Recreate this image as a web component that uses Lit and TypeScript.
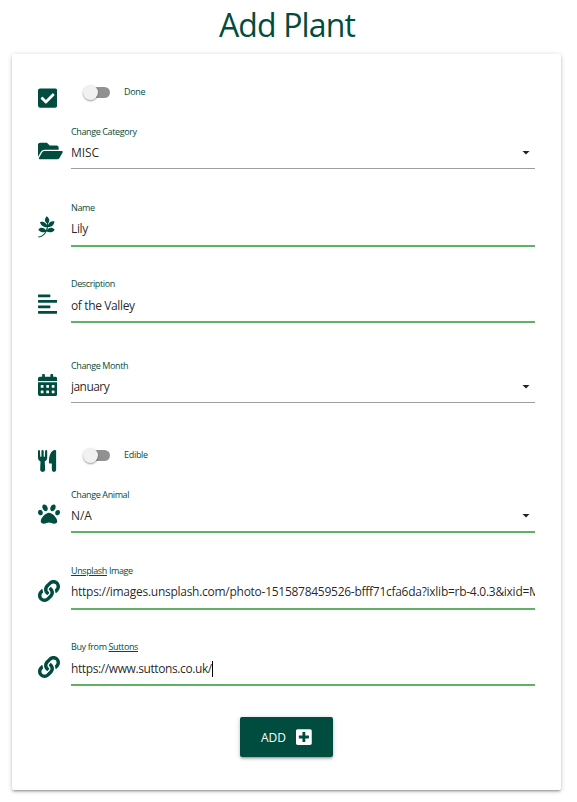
import { LitElement, html, css, svg } from "lit";
import { customElement, property } from "lit/decorators.js";
import { classMap } from "lit/directives/class-map.js";

const icons: Record<string, { w: number; d: string }> = {
  check: { w: 448, d: "M400 480H48c-26.51 0-48-21.49-48-48V80c0-26.51 21.49-48 48-48h352c26.51 0 48 21.49 48 48v352c0 26.51-21.49 48-48 48zm-204.686-98.059l184-184c6.248-6.248 6.248-16.379 0-22.627l-22.627-22.627c-6.248-6.248-16.379-6.249-22.628 0L184 302.745l-70.059-70.059c-6.248-6.248-16.379-6.248-22.628 0l-22.627 22.627c-6.248 6.248-6.248 16.379 0 22.627l104 104c6.249 6.25 16.379 6.25 22.628.001z" },
  folder: { w: 576, d: "M572.694 292.093L500.27 416.248A63.997 63.997 0 0 1 444.989 448H45.025c-18.523 0-30.064-20.093-20.731-36.093l72.424-124.155A64 64 0 0 1 152 256h399.964c18.523 0 30.064 20.093 20.73 36.093zM152 224h328v-48c0-26.51-21.49-48-48-48H272l-64-64H48C21.49 64 0 85.49 0 112v278.046l69.077-118.418C86.214 242.25 117.989 224 152 224z" },
  leaf: { w: 448, d: "M4 478C70 476 130 440 176 366C140 388 60 386 8 318C52 254 130 260 184 330C196 304 201 284 204 258C140 268 76 230 44 146C116 116 176 148 206 212L207 168C150 130 148 62 202 4C270 56 284 118 234 168L233 212C256 146 306 112 382 128C374 208 320 262 232 256C230 284 224 306 216 326C262 262 330 252 388 318C350 384 270 396 202 362C154 450 92 502 8 500Z" },
  text: { w: 448, d: "M12.83 352h262.34A12.82 12.82 0 0 0 288 339.17v-38.34A12.82 12.82 0 0 0 275.17 288H12.83A12.82 12.82 0 0 0 0 300.83v38.34A12.82 12.82 0 0 0 12.83 352zm0-256h262.34A12.82 12.82 0 0 0 288 83.17V44.83A12.82 12.82 0 0 0 275.17 32H12.83A12.82 12.82 0 0 0 0 44.83v38.34A12.82 12.82 0 0 0 12.83 96zM432 160H16a16 16 0 0 0-16 16v32a16 16 0 0 0 16 16h416a16 16 0 0 0 16-16v-32a16 16 0 0 0-16-16zm0 256H16a16 16 0 0 0-16 16v32a16 16 0 0 0 16 16h416a16 16 0 0 0 16-16v-32a16 16 0 0 0-16-16z" },
  calendar: { w: 448, d: "M400 64h-48V16c0-8.8-7.2-16-16-16h-32c-8.8 0-16 7.2-16 16v48H160V16c0-8.8-7.2-16-16-16h-32c-8.8 0-16 7.2-16 16v48H48C21.5 64 0 85.5 0 112v48h448v-48c0-26.500-21.500-48-48-48zM0 192V464c0 26.500 21.500 48 48 48h352c26.500 0 48-21.500 48-48V192zM76 256h40q12 0 12 12v40q0 12-12 12H76q-12 0-12-12v-40q0-12 12-12zm128 0h40q12 0 12 12v40q0 12-12 12h-40q-12 0-12-12v-40q0-12 12-12zm128 0h40q12 0 12 12v40q0 12-12 12h-40q-12 0-12-12v-40q0-12 12-12zM76 384h40q12 0 12 12v40q0 12-12 12H76q-12 0-12-12v-40q0-12 12-12zm128 0h40q12 0 12 12v40q0 12-12 12h-40q-12 0-12-12v-40q0-12 12-12zm128 0h40q12 0 12 12v40q0 12-12 12h-40q-12 0-12-12v-40q0-12 12-12z" },
  cutlery: { w: 448, d: "M0 24Q2 0 24 0Q44 0 46 24L52 156H80V24Q82 0 106 0Q130 0 132 24V156H160L166 24Q168 0 190 0Q212 0 214 24V190Q214 244 158 270L166 462Q166 512 108 512Q50 512 50 462L58 270Q0 244 0 190ZM422 20V462Q422 512 372 512Q322 512 322 462V312H276Q254 312 254 290C252 130 300 0 398 0Q422 0 422 20Z" },
  paw: { w: 512, d: "M256 224c-79.41 0-192 122.76-192 200.25 0 34.9 26.81 55.75 71.74 55.75 48.84 0 81.09-25.08 120.26-25.08 39.51 0 71.85 25.08 120.26 25.08 44.93 0 71.74-20.85 71.74-55.75C448 346.76 335.41 224 256 224zm-147.28-12.61c-10.4-34.65-42.44-57.09-71.56-50.13-29.12 6.96-44.29 40.69-33.89 75.34 10.4 34.65 42.44 57.09 71.56 50.13 29.12-6.96 44.29-40.69 33.89-75.34zm84.72-20.78c30.94-8.14 42.93-49.39 26.77-92.13s-54.32-70.33-85.26-62.19-42.93 49.39-26.77 92.13c16.16 42.74 54.33 70.33 85.26 62.19zm281.39-29.34c-29.12-6.96-61.15 15.48-71.56 50.13-10.4 34.65 4.77 68.38 33.89 75.34 29.12 6.96 61.15-15.48 71.56-50.13 10.4-34.65-4.77-68.38-33.89-75.34zm-156.27 29.34c30.94 8.14 69.11-19.44 85.26-62.19 16.16-42.74 4.17-83.99-26.77-92.13s-69.11 19.44-85.26 62.19c-16.16 42.74-4.17 83.99 26.77 92.13z" },
  link: { w: 512, d: "M326.612 185.391c59.747 59.809 58.927 155.698.36 214.59-.11.12-.24.25-.36.37l-67.2 67.2c-59.27 59.27-155.699 59.262-214.96 0-59.27-59.26-59.27-155.7 0-214.96l37.106-37.106c9.84-9.84 26.786-3.3 27.294 10.606.648 17.722 3.826 35.527 9.69 52.721 1.986 5.822.567 12.262-3.783 16.612l-13.087 13.087c-28.026 28.026-28.905 73.66-1.155 101.96 28.024 28.579 74.086 28.749 102.325.51l67.2-67.19c28.191-28.191 28.073-73.757 0-101.83-3.701-3.694-7.429-6.564-10.341-8.569a16.037 16.037 0 0 1-6.947-12.606c-.396-10.567 3.348-21.456 11.698-29.806l21.054-21.055c5.521-5.521 14.182-6.199 20.584-1.731a152.482 152.482 0 0 1 20.522 17.197zM467.547 44.449c-59.261-59.262-155.69-59.27-214.96 0l-67.2 67.2c-.12.12-.25.25-.36.37-58.566 58.892-59.387 154.781.36 214.59a152.454 152.454 0 0 0 20.521 17.196c6.402 4.468 15.064 3.789 20.584-1.731l21.054-21.055c8.35-8.35 12.094-19.239 11.698-29.806a16.037 16.037 0 0 0-6.947-12.606c-2.912-2.005-6.64-4.875-10.341-8.569-28.073-28.073-28.191-73.639 0-101.83l67.2-67.19c28.239-28.239 74.3-28.069 102.325.51 27.75 28.3 26.872 73.934-1.155 101.96l-13.087 13.087c-4.35 4.35-5.769 10.79-3.783 16.612 5.864 17.194 9.042 34.999 9.69 52.721.509 13.906 17.454 20.446 27.294 10.606l37.106-37.106c59.271-59.259 59.271-155.699.001-214.959z" },
  plus: { w: 448, d: "M400 32H48C21.500 32 0 53.500 0 80v352c0 26.500 21.500 48 48 48h352c26.500 0 48-21.500 48-48V80c0-26.500-21.500-48-48-48zm-32 252c0 6.600-5.400 12-12 12h-92v92c0 6.600-5.400 12-12 12h-56c-6.600 0-12-5.400-12-12v-92H92c-6.600 0-12-5.400-12-12v-56c0-6.600 5.400-12 12-12h92v-92c0-6.600 5.400-12 12-12h56c6.600 0 12 5.400 12 12v92h92c6.600 0 12 5.400 12 12v56z" },
};

@customElement("form-icon")
export class FormIcon extends LitElement {
  @property() name = "check";
  static styles = css`
    :host { display: block; height: 22px; }
    svg { display: block; height: 100%; fill: currentColor; fill-rule: evenodd; }
  `;
  render() {
    const i = icons[this.name];
    return html`<svg viewBox="0 0 ${i.w} 512">${svg`<path d=${i.d}></path>`}</svg>`;
  }
}

@customElement("app-root")
export class AppRoot extends LitElement {
  static styles = css`
    :host {
      display: block;
      height: 802px;
      overflow: hidden;
      background: #fff;
      color: #004d40;
      font-family: "Open Sans", "Noto Sans", sans-serif;
    }
    * { box-sizing: border-box; }
    h1 {
      margin: 0;
      height: 54px;
      padding: 2px 3px 0 0;
      text-align: center;
      font-size: 32px;
      line-height: 45px;
      font-weight: 400;
      letter-spacing: -0.85px;
    }
    .card {
      margin: 0 16px 0 12px;
      height: 736px;
      padding: 26px 26px 0;
      border-radius: 2px;
      box-shadow: 0 2px 2px 0 rgba(0, 0, 0, 0.14), 0 3px 1px -2px rgba(0, 0, 0, 0.12), 0 1px 5px 0 rgba(0, 0, 0, 0.2);
    }
    .row { display: grid; grid-template-columns: 33px 464px; height: 76px; }
    .row.switch { height: 44px; }
    .row.tall { height: 82px; }
    .row.month { height: 85px; }
    .row form-icon { margin-top: 16px; }
    .row form-icon[name="text"], .row form-icon[name="link"] { margin-top: 17px; }
    .row.switch form-icon { margin-top: 7px; }
    .field { height: 46px; }
    .label { height: 16px; font-size: 9px; line-height: 16px; letter-spacing: -0.38px; white-space: nowrap; }
    .label u { text-underline-offset: 1px; }
    .control {
      display: flex;
      align-items: center;
      justify-content: space-between;
      height: 29px;
      padding-bottom: 3px;
      border-bottom: 1px solid #9e9e9e;
      color: rgba(0, 0, 0, 0.87);
      font-size: 12px;
      line-height: 20px;
      letter-spacing: -0.37px;
      white-space: nowrap;
      overflow: hidden;
    }
    .control.valid { height: 31px; padding-bottom: 4px; border-bottom: 2px solid #5fb163; }
    .control.valid.select { height: 30px; padding-bottom: 3px; }
    .control.low { padding-bottom: 2px; }
    .caps { letter-spacing: -0.1px; }
    .tight { letter-spacing: -0.55px; }
    .long { letter-spacing: -0.27px; }
    .focus .value { border-right: 1px solid #000; line-height: 16px; letter-spacing: -0.4px; }
    .arrow { width: 8px; height: 4px; margin-right: 5px; background: #222; clip-path: polygon(0 0, 100% 0, 50% 100%); }
    .toggle { display: flex; align-items: center; height: 24px; padding-left: 14px; font-size: 9px; letter-spacing: -0.3px; }
    .toggle span { margin-top: -1px; }
    .track { width: 25px; height: 11px; margin-right: 14px; border-radius: 6px; background: #919191; }
    .thumb { width: 15px; height: 15px; margin: -2px 0 0 -2px; border-radius: 50%; background: #f1f1f1; box-shadow: 0 1px 2px rgba(0, 0, 0, 0.4); }
    .actions { display: flex; justify-content: center; }
    .btn {
      display: flex;
      align-items: center;
      width: 93px;
      height: 40px;
      margin-top: 2px;
      padding: 0 0 0 21px;
      border: 0;
      border-radius: 2px;
      background: #004d40;
      color: #fff;
      font: 12px "Open Sans", sans-serif;
      box-shadow: 0 2px 2px 0 rgba(0, 0, 0, 0.14), 0 1px 5px 0 rgba(0, 0, 0, 0.2), 0 3px 1px -2px rgba(0, 0, 0, 0.12);
    }
    .btn span { width: 35px; text-align: left; }
    .btn form-icon { height: 18px; }
  `;

  private toggle(icon: string, label: string) {
    return html`<div class="row switch">
      <form-icon name=${icon}></form-icon>
      <div class="toggle"><div class="track"><div class="thumb"></div></div><span>${label}</span></div>
    </div>`;
  }

  private field(icon: string, label: unknown, value: string, o: { size?: string; text?: string; valid?: boolean; arrow?: boolean; low?: boolean; focus?: boolean } = {}) {
    return html`<div class="row ${o.size ?? ""}">
      <form-icon name=${icon}></form-icon>
      <div class="field">
        <div class="label">${label}</div>
        <div class=${classMap({ control: true, select: !!o.arrow, valid: !!o.valid, low: !!o.low, focus: !!o.focus })}>
          <span class="value ${o.text ?? ""}">${value}</span>${o.arrow ? html`<i class="arrow"></i>` : ""}
        </div>
      </div>
    </div>`;
  }

  render() {
    return html`<h1>Add Plant</h1>
      <div class="card">
        ${this.toggle("check", "Done")}
        ${this.field("folder", "Change Category", "MISC", { arrow: true, text: "caps" })}
        ${this.field("leaf", "Name", "Lily", { valid: true })}
        ${this.field("text", "Description", "of the Valley", { valid: true, low: true, size: "tall" })}
        ${this.field("calendar", "Change Month", "january", { arrow: true, size: "month", text: "tight" })}
        ${this.toggle("cutlery", "Edible")}
        ${this.field("paw", "Change Animal", "N/A", { arrow: true, valid: true, text: "caps" })}
        ${this.field("link", html`<u>Unsplash</u> Image`, "https://images.unsplash.com/photo-1515878459526-bfff71cfa6da?ixlib=rb-4.0.3&ixid=M", { valid: true, text: "long" })}
        ${this.field("link", html`Buy from <u>Suttons</u>`, "https://www.suttons.co.uk/", { valid: true, low: true, focus: true })}
        <div class="actions"><button class="btn"><span>ADD</span><form-icon name="plus"></form-icon></button></div>
      </div>`;
  }
}
